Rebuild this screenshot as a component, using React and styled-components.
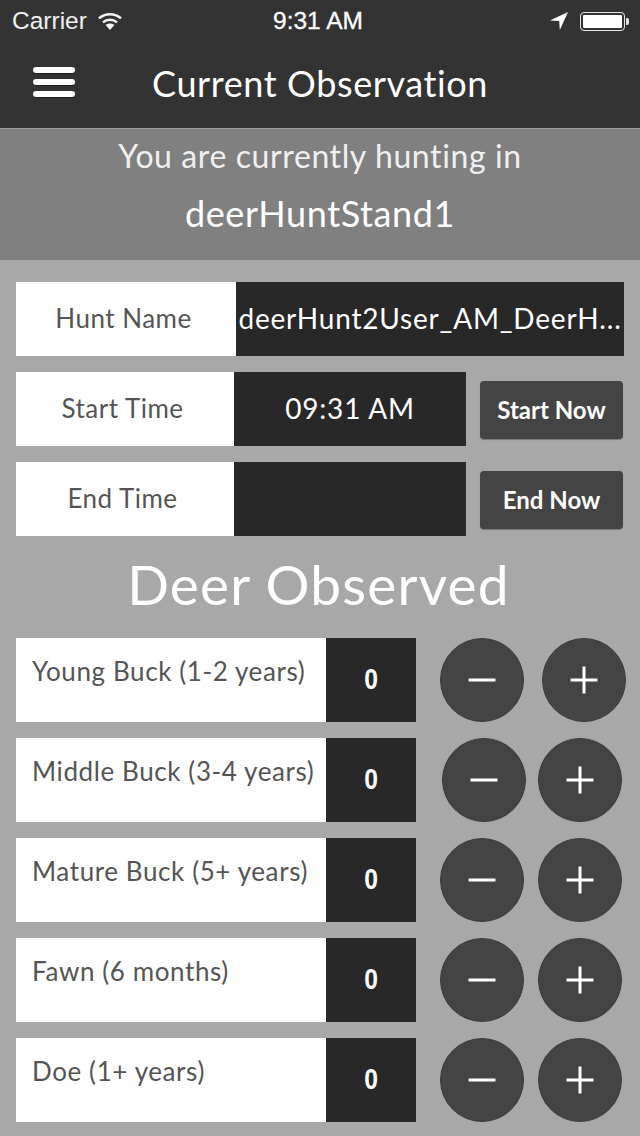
import React from 'react'
import styled, { createGlobalStyle } from 'styled-components'

const GlobalStyle = createGlobalStyle`
html, body {
    margin: 0;
    padding: 0;
    background-color: #a8a8a8;
}
* {
    box-sizing: border-box;
}
`;

const Wrapper = styled.div`
width: 640px;
height: 1136px;
overflow: hidden;
background-color: #a8a8a8;
font-family: "Lato", "Open Sans", sans-serif;
`;
const Header = styled.header`
height: 128px;
background-color: #333333;
color: #fff;
`;
const StatusBar = styled.div`
height: 40px;
display: grid;
grid-template-columns: 1fr auto 1fr;
align-items: center;
font-family: "Liberation Sans", Arial, sans-serif;
font-size: 24.5px;
line-height: 42px;
`;
const StatusLeft = styled.div`
display: flex;
align-items: center;
gap: 11px;
padding-left: 12px;
color: #f0f0f0;
`;
const StatusTime = styled.div`
-webkit-text-stroke: 0.3px #fff;
transform: translateX(-2px);
`;
const StatusRight = styled.div`
display: flex;
align-items: center;
justify-content: flex-end;
gap: 12px;
padding-right: 15px;
`;
const Battery = styled.div`
position: relative;
width: 45px;
height: 19px;
border: 1.5px solid #e4e4e4;
border-radius: 4px;
padding: 2px;
&::before {
    content: "";
    display: block;
    height: 100%;
    background-color: #fff;
    border-radius: 1px;
}
&::after {
    content: "";
    position: absolute;
    right: -5px;
    top: 5px;
    width: 3px;
    height: 7px;
    background-color: #e4e4e4;
    border-radius: 0 2px 2px 0;
}
`;
const NavBar = styled.div`
height: 88px;
display: grid;
grid-template-columns: 1fr auto 1fr;
align-items: center;
`;
const MenuButton = styled.div`
width: 42px;
margin: 0 0 4px 33px;
display: flex;
flex-direction: column;
gap: 6px;
`;
const MenuBar = styled.span`
height: 6px;
border-radius: 3px;
background-color: #fff;
box-shadow: 0 1px 1px rgba(0, 0, 0, 0.4);
`;
const NavTitle = styled.h1`
margin: 0 0 2px;
font-size: 36px;
font-weight: 400;
letter-spacing: 0.6px;
line-height: 40px;
color: #fff;
`;
const Banner = styled.div`
height: 132px;
background-color: #808080;
border-top: 1px solid #9c9c9c;
display: flex;
flex-direction: column;
align-items: center;
padding-top: 7px;
`;
const BannerLine = styled.div`
font-size: 32px;
line-height: 40px;
letter-spacing: 0.6px;
color: #f0f0f0;
`;
const BannerName = styled(BannerLine)`
font-size: 36px;
letter-spacing: 0.6px;
margin-top: 17px;
color: #fff;
`;
const Form = styled.div`
display: flex;
flex-direction: column;
gap: 16px;
padding: 22px 16px 0;
`;
const Row = styled.div`
display: flex;
align-items: center;
height: 74px;
`;
const InfoLabel = styled.div`
width: ${(p) => p.$width}px;
height: 100%;
display: flex;
align-items: center;
justify-content: center;
padding: 0 5px 2px 0;
background-color: #fff;
color: #555;
font-size: 26px;
letter-spacing: 0.5px;
`;
const InfoValue = styled.div`
width: ${(p) => p.$width}px;
height: 100%;
display: flex;
align-items: center;
justify-content: center;
padding-bottom: 3px;
background-color: #282828;
color: #fff;
font-size: 28px;
letter-spacing: 0.8px;
white-space: nowrap;
overflow: hidden;
`;
const ActionButton = styled.button`
width: 143px;
height: 58px;
margin: 2px 0 0 14px;
border: none;
border-radius: 4px;
background-color: #444444;
box-shadow: 0 1px 1px #777;
color: #fff;
font-family: inherit;
font-size: 24px;
font-weight: 700;
padding: 0 0 2px;
`;
const SectionTitle = styled.h2`
margin: 0;
height: 70px;
padding-right: 3px;
font-size: 55px;
line-height: 64px;
font-weight: 400;
letter-spacing: 1.2px;
text-align: center;
color: #fff;
`;
const DeerList = styled(Form)`
padding-top: 16px;
`;
const DeerRow = styled.div`
display: flex;
align-items: center;
height: 84px;
`;
const DeerLabel = styled.div`
flex: none;
width: 310px;
height: 100%;
background-color: #fff;
color: #555;
font-size: 26px;
line-height: 34px;
padding: 16px 0 0 16px;
letter-spacing: 0.6px;
white-space: nowrap;
`;
const DeerCount = styled.div`
flex: none;
width: 90px;
height: 100%;
display: flex;
align-items: center;
justify-content: center;
padding-bottom: 2px;
background-color: #282828;
color: #fff;
font-family: "Liberation Sans", Arial, sans-serif;
font-size: 29px;
font-weight: 700;
`;
const CountGlyph = styled.span`
display: block;
transform: scaleX(0.85);
`;
const Stepper = styled.div`
flex: none;
display: flex;
margin-left: ${(p) => p.$offset}px;
gap: ${(p) => p.$gap}px;
`;
const RoundButton = styled.button`
width: 84px;
height: 84px;
border: 1px solid #3c3c3c;
border-radius: 50%;
background-color: #444444;
padding: 0;
display: flex;
align-items: center;
justify-content: center;
`;

const deer = [
    { name: 'Young Buck (1-2 years)', offset: 24, gap: 18 },
    { name: 'Middle Buck (3-4 years)', offset: 26, gap: 12 },
    { name: 'Mature Buck (5+ years)', offset: 24, gap: 14 },
    { name: 'Fawn (6 months)', offset: 24, gap: 14 },
    { name: 'Doe (1+ years)', offset: 24, gap: 14 },
];

const WifiIcon = () => (
    <svg width="24" height="18" viewBox="0 0 24 18">
        <path d="M1 6.4C7 .8 17 .8 23 6.4" fill="none" stroke="#f4f4f4" strokeWidth="2.6" />
        <path d="M5 10.4c4-3.6 10-3.6 14 0" fill="none" stroke="#f4f4f4" strokeWidth="2.6" />
        <path d="M12 18l-4.4-5c2.6-2 6.2-2 8.8 0z" fill="#f4f4f4" />
    </svg>
);

const LocationIcon = () => (
    <svg width="18" height="18" viewBox="0 0 18 18">
        <path d="M18 0L0 8.6l9.2.4.6 9z" fill="#fff" />
    </svg>
);

const MinusIcon = () => (
    <svg width="28" height="4" viewBox="0 0 28 4">
        <rect width="27" height="3" x="0.5" y="0.5" fill="#fff" />
    </svg>
);

const PlusIcon = () => (
    <svg width="28" height="28" viewBox="0 0 28 28">
        <rect width="27" height="3" x="0.5" y="12.5" fill="#fff" />
        <rect width="3" height="27" x="12.5" y="0.5" fill="#fff" />
    </svg>
);

export default function App() {
    return (
        <Wrapper>
            <GlobalStyle />
            <Header>
                <StatusBar>
                    <StatusLeft>
                        <span>Carrier</span>
                        <WifiIcon />
                    </StatusLeft>
                    <StatusTime>9:31 AM</StatusTime>
                    <StatusRight>
                        <LocationIcon />
                        <Battery />
                    </StatusRight>
                </StatusBar>
                <NavBar>
                    <MenuButton>
                        <MenuBar />
                        <MenuBar />
                        <MenuBar />
                    </MenuButton>
                    <NavTitle>Current Observation</NavTitle>
                </NavBar>
            </Header>
            <Banner>
                <BannerLine>You are currently hunting in</BannerLine>
                <BannerName>deerHuntStand1</BannerName>
            </Banner>
            <Form>
                <Row>
                    <InfoLabel $width={220}>Hunt Name</InfoLabel>
                    <InfoValue $width={388}>deerHunt2User_AM_DeerH...</InfoValue>
                </Row>
                <Row>
                    <InfoLabel $width={218}>Start Time</InfoLabel>
                    <InfoValue $width={232}>09:31 AM</InfoValue>
                    <ActionButton>Start Now</ActionButton>
                </Row>
                <Row>
                    <InfoLabel $width={218}>End Time</InfoLabel>
                    <InfoValue $width={232} />
                    <ActionButton>End Now</ActionButton>
                </Row>
                <SectionTitle>Deer Observed</SectionTitle>
            </Form>
            <DeerList>
                {deer.map((item) => (
                    <DeerRow key={item.name}>
                        <DeerLabel>{item.name}</DeerLabel>
                        <DeerCount><CountGlyph>0</CountGlyph></DeerCount>
                        <Stepper $offset={item.offset} $gap={item.gap}>
                            <RoundButton aria-label="minus"><MinusIcon /></RoundButton>
                            <RoundButton aria-label="plus"><PlusIcon /></RoundButton>
                        </Stepper>
                    </DeerRow>
                ))}
            </DeerList>
        </Wrapper>
    )
}
